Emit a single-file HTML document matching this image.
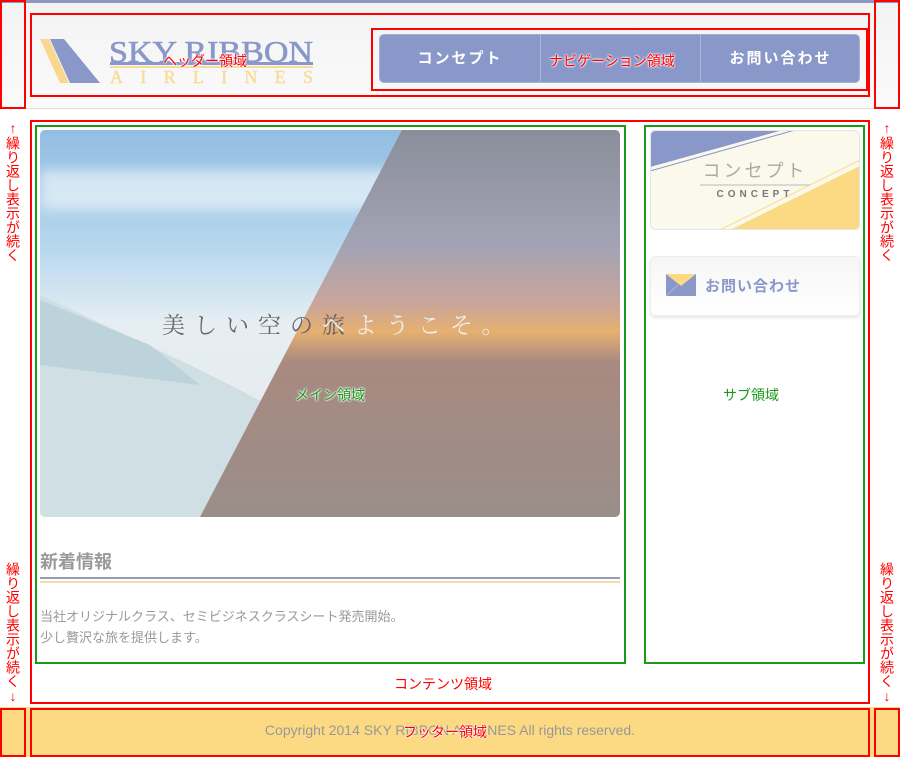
<!DOCTYPE html>
<html><head><meta charset="utf-8"><style>
*{margin:0;padding:0;box-sizing:border-box}
body{width:900px;height:757px;position:relative;background:#fff;font-family:"Liberation Sans","Noto Sans CJK JP",sans-serif;overflow:hidden}
.a{position:absolute}
.rb{position:absolute;border:2px solid #f00}
.gb{position:absolute;border:2px solid #1a9a1a}
.lbl{position:absolute;color:#f00;font-size:14px;text-shadow:0 0 2px #fff,0 0 2px #fff,0 0 2px #fff}
.vt{position:absolute;color:#f00;font-size:14px;writing-mode:vertical-rl;text-orientation:upright;line-height:14px;letter-spacing:0}
.nav{position:absolute;left:379px;top:34px;width:481px;height:49px;background:#8a97c9;border-radius:5px;border:1px solid #a5b0d6}
.nav div{position:absolute;top:0;height:47px;width:160px;color:#fff;font-weight:bold;font-size:15px;text-align:center;line-height:47px;letter-spacing:2px}
</style></head><body>
<div class="a" style="left:0;top:0;width:900px;height:3px;background:#8d97c3"></div>
<div class="a" style="left:0;top:3px;width:900px;height:106px;background:linear-gradient(#f3f3f3,#fafafa)"></div>
<div class="a" style="left:0;top:108px;width:900px;height:1px;background:#ddd"></div>

<svg class="a" style="left:0;top:0" width="340" height="100">
<polygon points="40,39 49,39 69,83 60,83" fill="#f7d88e"/>
<polygon points="50,39 64,39 100,83 70,83" fill="#8a97c9"/>
<text x="109" y="62" font-family="Liberation Serif,serif" font-size="31" fill="#8a97c9" textLength="204" lengthAdjust="spacingAndGlyphs" stroke="#8a97c9" stroke-width=".6">SKY RIBBON</text>
<rect x="110" y="62" width="203" height="3" fill="#8a97c9"/>
<rect x="110" y="66" width="203" height="2" fill="#f7dc98"/>
<text x="110" y="83" font-family="Liberation Serif,serif" font-size="18" fill="#f7dc98" textLength="203" stroke="#f7dc98" stroke-width=".4">AIRLINES</text>
</svg>

<div class="nav">
<div style="left:0">コンセプト</div>
<div style="left:160px;border-left:1px solid #aab3da"></div>
<div style="left:320px;border-left:1px solid #aab3da">お問い合わせ</div>
</div>

<!-- hero -->
<div class="a" style="left:40px;top:130px;width:580px;height:387px;border-radius:5px;overflow:hidden;background:linear-gradient(#92bde2 0%,#b6d7ee 30%,#e6eef3 50%,#e6ecee 70%,#d3e2e8 100%)">
<div class="a" style="left:0;top:40px;width:580px;height:40px;background:rgba(255,255,255,.55);filter:blur(6px)"></div>
<svg class="a" style="left:0;top:0" width="580" height="387">
<defs><linearGradient id="g" x1="0" y1="0" x2="0" y2="1"><stop offset="0" stop-color="#8a8e9a"/><stop offset=".3" stop-color="#a3a3b5"/><stop offset=".45" stop-color="#c9a59a"/><stop offset=".52" stop-color="#e6b070"/><stop offset=".6" stop-color="#a88a80"/><stop offset="1" stop-color="#9a8e8a"/></linearGradient></defs>
<polygon points="0,165 150,235 200,260 330,330 400,387 0,387" fill="#cfdfe4"/>
<polygon points="0,170 110,215 160,255 0,235" fill="#bcd3dc"/>
<polygon points="362,0 580,0 580,387 160,387" fill="url(#g)"/>
<text x="122" y="203" font-family="Noto Serif CJK SC,serif" font-size="23" fill="#666" letter-spacing="9">美しい空の旅</text>
<text x="282" y="203" font-family="Noto Serif CJK SC,serif" font-size="23" fill="#eee" letter-spacing="9">へようこそ。</text>
</svg>
</div>

<div class="a" style="left:40px;top:548px;font-size:18px;font-weight:bold;color:#999">新着情報</div>
<div class="a" style="left:40px;top:577px;width:580px;height:2px;background:#959cb8"></div>
<div class="a" style="left:40px;top:581px;width:580px;height:2px;background:#f3deaa"></div>
<div class="a" style="left:40px;top:606px;font-size:13px;line-height:21px;color:#999">当社オリジナルクラス、セミビジネスクラスシート発売開始。<br>少し贅沢な旅を提供します。</div>

<!-- sub -->
<svg class="a" style="left:650px;top:130px" width="211" height="104">
<defs><clipPath id="c"><rect x="0" y="0" width="210" height="100" rx="5"/></clipPath></defs>
<g clip-path="url(#c)">
<rect width="210" height="100" fill="#faf9ec"/>
<polygon points="0,0 133,0 0,37" fill="#8a97c9"/>
<line x1="0" y1="41" x2="145" y2="0" stroke="#8a97c9" stroke-width="1"/>
<polygon points="210,36 210,100 80,100" fill="#fcd983"/>
<line x1="70" y1="100" x2="210" y2="30" stroke="#fcd983" stroke-width="1"/>
</g>
<rect x=".5" y=".5" width="209" height="99" rx="5" fill="none" stroke="#e5e5e5"/>
<text x="105" y="47" text-anchor="middle" font-size="18" fill="#aaa" letter-spacing="3">コンセプト</text>
<line x1="50" y1="55" x2="160" y2="55" stroke="#bbb"/>
<text x="105" y="67" text-anchor="middle" font-size="10" fill="#777" letter-spacing="4" font-weight="bold">CONCEPT</text>
</svg>
<div class="a" style="left:650px;top:256px;width:210px;height:60px;border:1px solid #eee;border-radius:5px;background:linear-gradient(#f6f6f6,#fff);box-shadow:0 2px 3px #e5e5e5"></div>
<svg class="a" style="left:666px;top:274px" width="30" height="22"><rect width="30" height="22" fill="#8a97c9"/><polygon points="0,0 30,0 15,12" fill="#fcd983"/><polyline points="0,22 12,11 M18,11 30,22" fill="none" stroke="#aab3da"/></svg>
<div class="a" style="left:705px;top:275px;font-size:15px;font-weight:bold;color:#8a97c9;letter-spacing:1px">お問い合わせ</div>

<!-- footer -->
<div class="a" style="left:0;top:707px;width:900px;height:50px;background:#fcd983"></div>
<div class="a" style="left:0;top:722px;width:900px;text-align:center;font-size:14px;color:#999">Copyright 2014 SKY RIBBON AIRLINES All rights reserved.</div>

<!-- annotations -->
<div class="rb" style="left:0;top:0;width:26px;height:109px"></div>
<div class="rb" style="left:874px;top:0;width:26px;height:109px"></div>
<div class="rb" style="left:30px;top:13px;width:840px;height:84px"></div>
<div class="rb" style="left:371px;top:28px;width:497px;height:63px"></div>
<div class="rb" style="left:30px;top:120px;width:840px;height:584px"></div>
<div class="gb" style="left:35px;top:125px;width:591px;height:539px"></div>
<div class="gb" style="left:644px;top:125px;width:221px;height:539px"></div>
<div class="rb" style="left:0;top:708px;width:26px;height:49px"></div>
<div class="rb" style="left:874px;top:708px;width:26px;height:49px"></div>
<div class="rb" style="left:30px;top:708px;width:840px;height:49px"></div>

<div class="vt" style="left:6px;top:120px">↑繰り返し表示が続く</div>
<div class="vt" style="left:880px;top:120px">↑繰り返し表示が続く</div>
<div class="vt" style="left:6px;top:562px">繰り返し表示が続く↓</div>
<div class="vt" style="left:880px;top:562px">繰り返し表示が続く↓</div>

<div class="lbl" style="left:163px;top:51px">ヘッダー領域</div>
<div class="lbl" style="left:549px;top:51px">ナビゲーション領域</div>
<div class="lbl" style="left:295px;top:385px;color:#1a9a1a">メイン領域</div>
<div class="lbl" style="left:723px;top:385px;color:#1a9a1a">サブ領域</div>
<div class="lbl" style="left:394px;top:674px">コンテンツ領域</div>
<div class="lbl" style="left:403px;top:722px">フッター領域</div>
</body></html>
